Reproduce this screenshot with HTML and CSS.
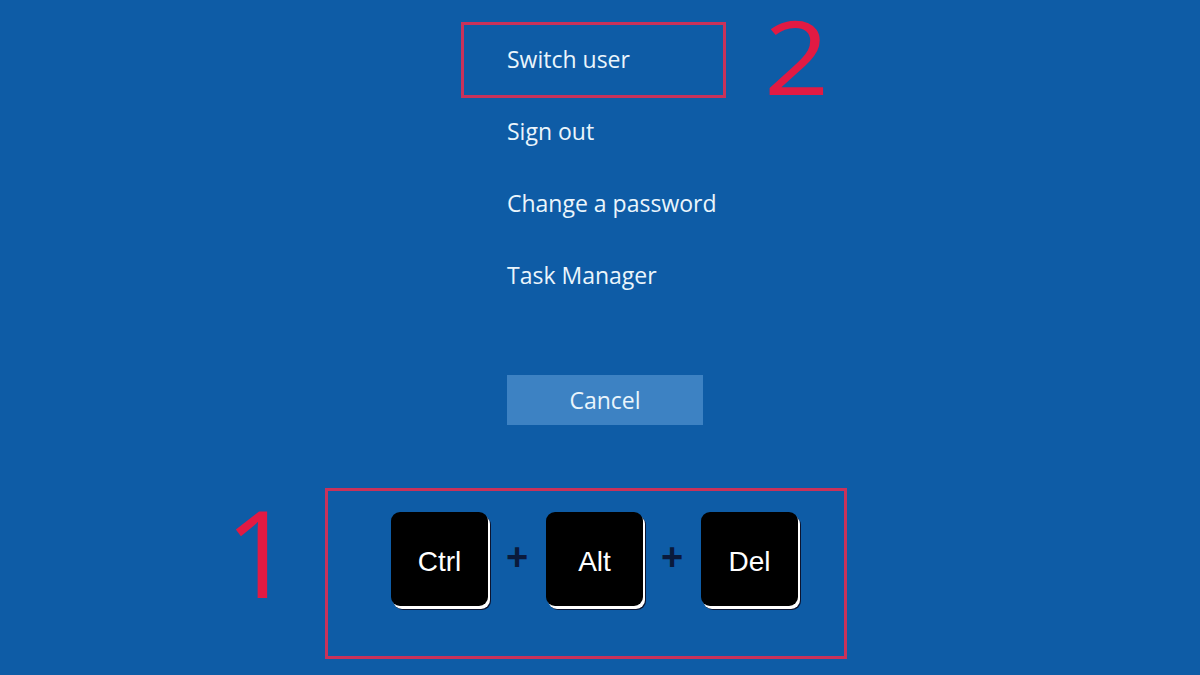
FILE: index.html
```html
<!DOCTYPE html>
<html lang="en">
<head>
<meta charset="utf-8">
<title>Ctrl Alt Del</title>
<link rel="stylesheet" href="styles.css">
</head>
<body>
<div class="page">
  <div class="top-row">
    <div class="highlight">
      <span class="menu-text">Switch user</span>
    </div>
    <span class="step step-two">2</span>
  </div>
  <ul class="menu">
    <li class="menu-item">Sign out</li>
    <li class="menu-item">Change a password</li>
    <li class="menu-item">Task Manager</li>
  </ul>
  <div class="cancel">Cancel</div>
  <div class="bottom-row">
    <span class="step step-one">1</span>
    <div class="keys-box">
      <div class="key">Ctrl</div>
      <span class="plus">+</span>
      <div class="key">Alt</div>
      <span class="plus">+</span>
      <div class="key">Del</div>
    </div>
  </div>
</div>
</body>
</html>
```

FILE: styles.css
```css
* { box-sizing: border-box; }
html, body {
  margin: 0;
  padding: 0;
  width: 1200px;
  height: 675px;
  overflow: hidden;
  background: #0e5ca6;
}
.page {
  padding-top: 22px;
  font-family: "Open Sans", "Noto Sans", sans-serif;
  color: #eaf5fc;
}
.top-row {
  display: flex;
  align-items: flex-start;
  margin-left: 461px;
  height: 76px;
}
.highlight {
  width: 265px;
  height: 76px;
  border: 3px solid #c9325a;
  padding-left: 43px;
  padding-bottom: 3px;
  display: flex;
  align-items: center;
}
.menu-text, .menu-item {
  font-size: 23px;
}
.step {
  display: block;
  color: #e21a43;
  font-family: "Open Sans", "Noto Sans", sans-serif;
  font-weight: 400;
  line-height: normal;
}
.step-two {
  font-size: 102px;
  width: 70px;
  margin-left: 38px;
  margin-top: -36px;
  transform: scaleX(1.12);
  transform-origin: left center;
}
.menu {
  list-style: none;
  margin: -3px 0 0 0;
  padding: 0 0 0 507px;
}
.menu-item {
  height: 72px;
  line-height: 72px;
}
.cancel {
  margin: 64px 0 0 507px;
  width: 196px;
  height: 50px;
  background: #3d82c3;
  display: flex;
  align-items: center;
  justify-content: center;
  font-size: 23px;
  padding-bottom: 1px;
}
.bottom-row {
  display: flex;
  align-items: flex-start;
  margin: 63px 0 0 225px;
}
.step-one {
  width: 100px;
  font-size: 120px;
  margin-top: -18px;
}
.keys-box {
  width: 522px;
  height: 171px;
  border: 3px solid #c9325a;
  display: flex;
  align-items: flex-start;
  padding: 21px 0 0 63px;
}
.key {
  width: 97px;
  height: 94px;
  background: #000;
  border-radius: 9px;
  box-shadow: 2px 3px 0 #ffffff, 3px 4px 0 #0b1430;
  color: #fff;
  font-family: "Liberation Sans", Arial, sans-serif;
  font-size: 28px;
  display: flex;
  align-items: center;
  justify-content: center;
  padding-top: 6px;
}
.plus {
  width: 58px;
  text-align: center;
  font-family: "Liberation Sans", Arial, sans-serif;
  font-size: 38px;
  font-weight: 700;
  color: #0a1a3c;
  margin-top: 24px;
}
```
